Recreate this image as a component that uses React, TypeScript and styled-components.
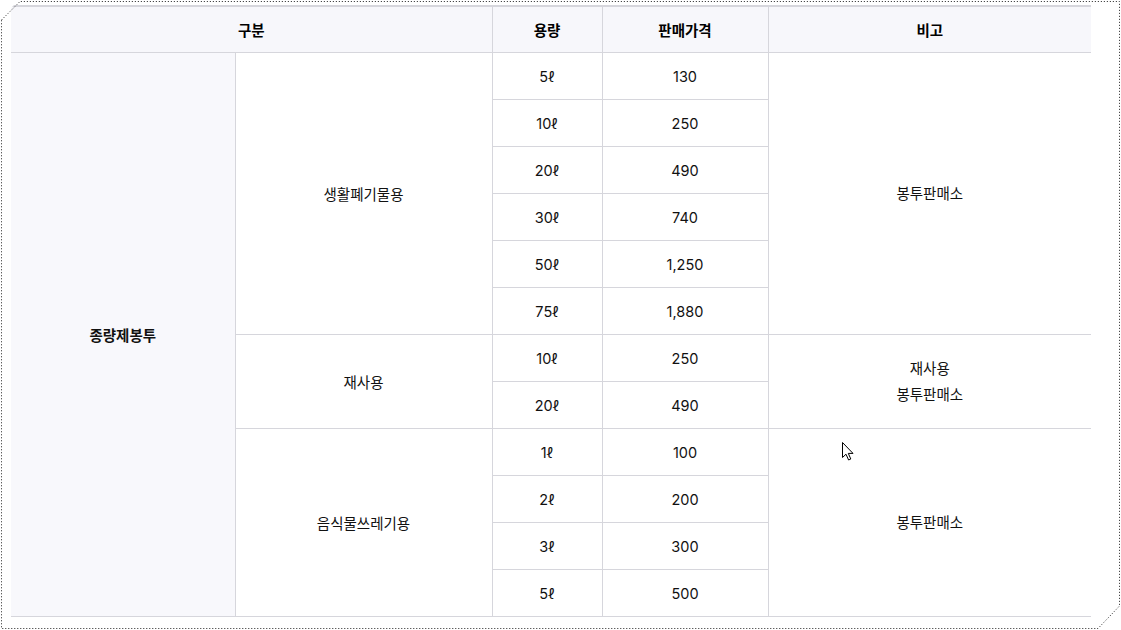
import styled, { createGlobalStyle } from 'styled-components';

type Group = {
  label: string;
  note: string[];
  items: [string, string][];
};

const groups: Group[] = [
  {
    label: '생활폐기물용',
    note: ['봉투판매소'],
    items: [
      ['5ℓ', '130'],
      ['10ℓ', '250'],
      ['20ℓ', '490'],
      ['30ℓ', '740'],
      ['50ℓ', '1,250'],
      ['75ℓ', '1,880'],
    ],
  },
  {
    label: '재사용',
    note: ['재사용', '봉투판매소'],
    items: [
      ['10ℓ', '250'],
      ['20ℓ', '490'],
    ],
  },
  {
    label: '음식물쓰레기용',
    note: ['봉투판매소'],
    items: [
      ['1ℓ', '100'],
      ['2ℓ', '200'],
      ['3ℓ', '300'],
      ['5ℓ', '500'],
    ],
  },
];

const totalRows = groups.reduce((sum, g) => sum + g.items.length, 0);

export default function App() {
  return (
    <>
      <GlobalStyle />
      <Frame>
        <TableWrap>
          <Table>
            <colgroup>
              <col style={{ width: 224 }} />
              <col style={{ width: 257 }} />
              <col style={{ width: 110 }} />
              <col style={{ width: 166 }} />
              <col style={{ width: 323 }} />
            </colgroup>
            <thead>
              <tr>
                <Th colSpan={2}>구분</Th>
                <Th>용량</Th>
                <Th>판매가격</Th>
                <Th>비고</Th>
              </tr>
            </thead>
            <tbody>
              {groups.map((group, gi) =>
                group.items.map(([size, price], i) => (
                  <tr key={`${gi}-${i}`}>
                    {gi === 0 && i === 0 && (
                      <Td rowSpan={totalRows} $shade $bold>
                        종량제봉투
                      </Td>
                    )}
                    {i === 0 && <Td rowSpan={group.items.length}>{group.label}</Td>}
                    <Td>{size}</Td>
                    <Td>{price}</Td>
                    {i === 0 && (
                      <Td rowSpan={group.items.length}>
                        {group.note.map(line => (
                          <NoteLine key={line}>{line}</NoteLine>
                        ))}
                      </Td>
                    )}
                  </tr>
                ))
              )}
            </tbody>
          </Table>
        </TableWrap>
        <Outline viewBox="0 0 1121 630" width={1121} height={630}>
          <polygon
            points="1.5,20 20,1.5 1119.5,1.5 1119.5,606 1098,628.5 1.5,628.5"
            fill="none"
            stroke="#222"
            strokeWidth={1}
            strokeDasharray="1 2"
          />
        </Outline>
        <Cursor viewBox="0 0 13 19" width={13} height={19}>
          <path
            d="M0.5 0.5 L0.5 15.5 L4 12.2 L6.6 18 L8.8 17 L6.3 11.4 L11 11.4 Z"
            fill="#fff"
            stroke="#000"
            strokeWidth={1}
            strokeLinejoin="miter"
          />
        </Cursor>
      </Frame>
    </>
  );
}

const GlobalStyle = createGlobalStyle`
  html, body {
    margin: 0;
    padding: 0;
    background: #ffffff;
  }

  body {
    font-family: Inter, "Noto Sans CJK KR", "Noto Sans", sans-serif;
    color: #111;
  }
`;

const Frame = styled.div`
  position: relative;
  width: 1121px;
  height: 630px;
  overflow: hidden;
  background: #ffffff;
  clip-path: polygon(0 19px, 19px 0, 100% 0, 100% 606px, 1098px 100%, 0 100%);
  padding: 5px 0 0 11px;
  box-sizing: border-box;
`;

const TableWrap = styled.div`
  width: 1080px;
  border-top: 2px solid #d6d6dc;
  border-bottom: 1px solid #d6d6dc;
`;

const Table = styled.table`
  width: 100%;
  table-layout: fixed;
  border-collapse: collapse;
  border-style: hidden;
  font-size: 14.5px;
  text-align: center;
`;

const Th = styled.th`
  height: 45px;
  padding: 0;
  background: #f7f7fb;
  border: 1px solid #d6d6dc;
  font-weight: 700;
  color: #000;
`;

const Td = styled.td<{ $shade?: boolean; $bold?: boolean }>`
  height: 46px;
  padding: 0;
  border: 1px solid #d6d6dc;
  background: ${p => (p.$shade ? '#f8f8fc' : '#ffffff')};
  font-weight: ${p => (p.$bold ? 700 : 400)};
  color: #111;
  vertical-align: middle;
`;

const NoteLine = styled.div`
  line-height: 26px;
`;

const Outline = styled.svg`
  position: absolute;
  left: 0;
  top: 0;
  pointer-events: none;
`;

const Cursor = styled.svg`
  position: absolute;
  left: 842px;
  top: 442px;
  pointer-events: none;
`;
